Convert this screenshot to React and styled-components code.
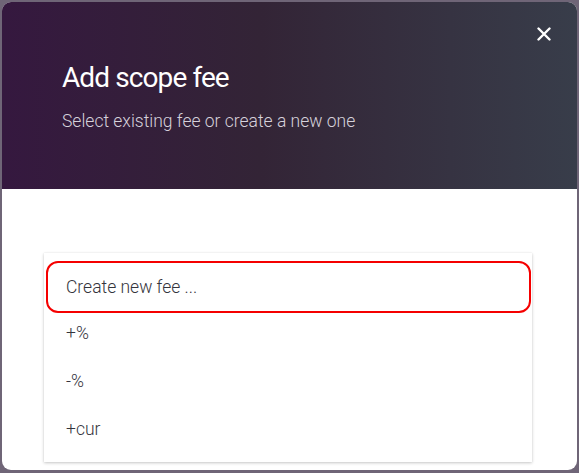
import React from "react";
import styled, { createGlobalStyle } from "styled-components";

const GlobalStyle = createGlobalStyle`
  html, body {
    margin: 0;
    padding: 0;
    background: #6f6577;
    font-family: Roboto, "Noto Sans", sans-serif;
  }
`;

const Overlay = styled.div`
  width: 579px;
  height: 473px;
  box-sizing: border-box;
  padding: 2px 2px 3px 2px;
  background: #6f6577;
`;

const Modal = styled.div`
  height: 100%;
  background: #fff;
  border-radius: 9px;
  overflow: hidden;
  display: flex;
  flex-direction: column;
`;

const Header = styled.div`
  position: relative;
  height: 187px;
  box-sizing: border-box;
  padding: 58px 60px 0;
  background: linear-gradient(90deg, #35183f 0%, #332436 45%, #383d4a 100%);
  color: #fff;
`;

const Title = styled.h1`
  margin: 0;
  font-size: 28px;
  font-weight: 400;
  line-height: 35px;
  letter-spacing: -0.9px;
`;

const Subtitle = styled.p`
  margin: 15px 0 0;
  font-size: 17.5px;
  font-weight: 300;
  line-height: 22px;
  color: #d6d1db;
`;

const CloseButton = styled.button`
  position: absolute;
  top: 22px;
  right: 23px;
  width: 20px;
  height: 20px;
  padding: 0;
  border: 0;
  background: none;
  cursor: pointer;
  display: flex;
  align-items: center;
  justify-content: center;
`;

const Body = styled.div`
  flex: 1;
  padding: 64px 45px 0 42px;
`;

const List = styled.ul`
  list-style: none;
  margin: 0;
  padding: 10px 0 9px;
  background: #fff;
  box-shadow: 0 1px 3px rgba(0, 0, 0, 0.22), 0 0 1px rgba(0, 0, 0, 0.08);
`;

const Item = styled.li`
  height: 48px;
  margin: ${(p) => (p.$active ? "0 3px -2px 4px" : "0 3px 0 4px")};
  padding-left: 18px;
  display: flex;
  align-items: center;
  font-size: 17.5px;
  font-weight: 300;
  color: #34343c;
  border-radius: 10px;
  outline: ${(p) => (p.$active ? "2.5px solid #f50000" : "none")};
`;

const items = ["Create new fee ...", "+%", "-%", "+cur"];

export default function App() {
  return (
    <>
      <GlobalStyle />
      <Overlay>
        <Modal>
          <Header>
            <Title>Add scope fee</Title>
            <Subtitle>Select existing fee or create a new one</Subtitle>
            <CloseButton aria-label="Close">
              <svg width="14" height="14" viewBox="0 0 14 14">
                <path d="M1.5 1.5L12.5 12.5M12.5 1.5L1.5 12.5" stroke="#fff" strokeWidth="2.4" strokeLinecap="round" />
              </svg>
            </CloseButton>
          </Header>
          <Body>
            <List>
              {items.map((label, i) => (
                <Item key={label} $active={i === 0}>
                  {label}
                </Item>
              ))}
            </List>
          </Body>
        </Modal>
      </Overlay>
    </>
  );
}
